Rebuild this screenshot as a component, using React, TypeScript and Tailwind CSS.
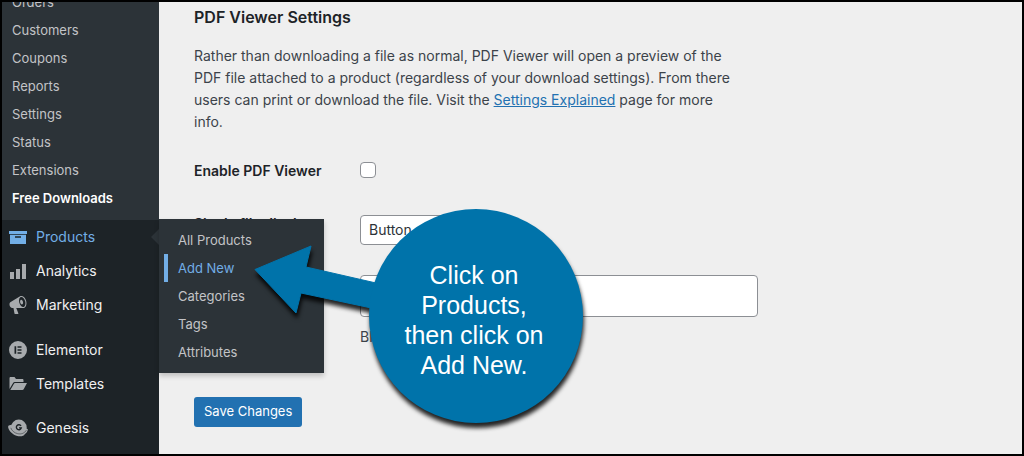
import type { ReactNode } from "react";

const wooItems = ["Orders", "Customers", "Coupons", "Reports", "Settings", "Status", "Extensions"];
const flyoutItems = ["All Products", "Add New", "Categories", "Tags", "Attributes"];

function Icon({ children }: { children: ReactNode }) {
  return (
    <svg viewBox="0 0 20 20" className="size-5 shrink-0 fill-current" aria-hidden="true">
      {children}
    </svg>
  );
}

const icons = {
  products: (
    <Icon>
      <path d="M1 4h18v3H1z" />
      <path fillRule="evenodd" d="M2 7.700h16v9.300H2zM7 9.300v1.500h6V9.300z" />
    </Icon>
  ),
  analytics: (
    <Icon>
      <path d="M2 11h4v7H2zM8 8h4v10H8zM14 3h4v15h-4z" />
    </Icon>
  ),
  marketing: (
    <Icon>
      <path
        fillRule="evenodd"
        d="M18.150 5.940c.46 1.620.38 3.220-.02 4.480-.42 1.280-1.260 2.180-2.300 2.480-.16.060-.26.060-.4.060-.06.020-.12.020-.18.020-.06.020-.14.020-.22.020h-6.800l2.220 5.500c.02.140-.06.260-.14.340-.08.100-.24.160-.34.160H6.950c-.1 0-.26-.06-.34-.16-.08-.08-.16-.2-.14-.34l-1-5.500H4.250l-.02-.02c-.5.060-1.080-.18-1.540-.62s-.88-1.080-1.060-1.880c-.24-.8-.2-1.560-.02-2.200.18-.62.580-1.080 1.060-1.300l.02-.02 9-5.400c.1-.06.180-.1.240-.16.060-.04.140-.08.240-.12.160-.08.280-.12.5-.18 1.040-.3 2.240.1 3.220.98s1.840 2.240 2.260 3.860zm-2.580 5.980h-.02c.4-.1.740-.34 1.040-.7.580-.7.860-1.760.860-3.040 0-.64-.1-1.300-.28-1.980-.34-1.360-1.020-2.500-1.780-3.240s-1.680-1.100-2.460-.88c-.82.220-1.400.96-1.700 2-.32 1.040-.28 2.360.06 3.720.38 1.360 1 2.500 1.800 3.240.78.740 1.620 1.100 2.480.88zm-2.540-7.080c.22-.04.42-.02.620.04.38.160.760.480 1.020 1s.42 1.200.42 1.780c0 .3-.04.560-.12.800-.18.480-.44.840-.86.940-.34.100-.8-.06-1.140-.4s-.64-.86-.78-1.500c-.18-.62-.12-1.240.02-1.720s.48-.84.820-.94z"
      />
    </Icon>
  ),
  elementor: (
    <Icon>
      <path fillRule="evenodd" d="M10 1a9 9 0 1 0 0 18a9 9 0 0 0 0-18zM6.500 6.200h1.700v7.600H6.500zM9.500 6.200h4v1.500h-4zM9.500 9.250h4v1.500h-4zM9.500 12.300h4v1.500h-4z" />
    </Icon>
  ),
  templates: (
    <Icon>
      <path d="M1.500 15V4.200c0-.7.500-1.200 1.200-1.200h3.800l1.500 2h6.300c.7 0 1.200.5 1.200 1.200V8H6.700c-.7 0-1.300.3-1.600 1z" />
      <path d="M2.300 16l3.500-6c.3-.6.700-.9 1.300-.9H19l-3.200 6c-.3.600-.8.900-1.400.9z" />
    </Icon>
  ),
  genesis: (
    <Icon>
      <circle cx="10.800" cy="9.500" r="7.900" />
      <path d="M3.500 7.200C1.200 6.800-.2 7.900.2 9.400c.9 3.800 4.400 7 8.300 8.300 3.500 1.200 7.200.7 8.200-1.400 1.700-1.200 3-3 3.200-5.100L17.500 10z" />
      <path fill="none" stroke="#1d2327" strokeWidth=".5" d="M2.800 9.800c.8 2.900 3.700 5.200 6.900 5.900 3.400.8 7-.5 8.700-3.600" />
      <path fill="none" stroke="#1d2327" strokeWidth="1.400" d="M13 7.900a2.500 2.500 0 1 0 .3 2h-2.300" />
    </Icon>
  ),
};

function MenuLink({ label, icon, active = false }: { label: string; icon: ReactNode; active?: boolean }) {
  return (
    <li>
      <a href="#" className={`flex h-[34px] items-center gap-2 pl-1.5 ${active ? "text-[#72aee6]" : "text-[#a7aaad]"}`}>
        {icon}
        <span className={active ? "" : "text-[#f0f0f1]"}>{label}</span>
      </a>
    </li>
  );
}

function Callout() {
  return (
    <div className="pointer-events-none absolute top-[198px] left-[248px] z-20 h-[235px] w-[345px]">
      <svg
        viewBox="250 200 345 235"
        className="absolute inset-0 size-full fill-[#0073aa] drop-shadow-[1px_5px_2px_rgba(0,0,0,0.85)]"
        aria-hidden="true"
      >
        <path d="M255 269.500L311 246l-5 21L376 283v26l-75-16-5 20z" stroke="#0073aa" strokeWidth="1" strokeLinejoin="round" />
        <ellipse cx="476" cy="316" rx="107" ry="107" />
      </svg>
      <p className="relative ml-[117px] w-[214px] pt-[60px] text-center font-['Liberation_Sans',Arial,sans-serif] text-[25px] leading-[30px] text-white">
        Click on
        <br />
        Products,
        <br />
        then click on
        <br />
        Add New.
      </p>
    </div>
  );
}

export default function App() {
  return (
    <div className="relative flex h-screen overflow-hidden border-2 border-black bg-[#efefef] font-[Inter,sans-serif] text-[13px] text-[#3c434a]">
      <nav aria-label="Admin menu" className="w-[157px] shrink-0 bg-[#1d2327]">
        <ul className="-mt-[14px] bg-[#2c3338] pb-2 text-[#c3c4c7]">
          {wooItems.map((item) => (
            <li key={item}>
              <a href="#" className="block pl-2.5 leading-7">{item}</a>
            </li>
          ))}
          <li>
            <a href="#" className="block pl-2.5 leading-7 font-semibold text-white">Free Downloads</a>
          </li>
        </ul>
        <div className="relative">
          <ul className="text-sm">
            <MenuLink label="Products" icon={icons.products} active />
            <MenuLink label="Analytics" icon={icons.analytics} />
            <MenuLink label="Marketing" icon={icons.marketing} />
          </ul>
          <span className="absolute top-[9px] right-0 border-y-8 border-r-8 border-y-transparent border-r-[#2c3338]" />
          <ul className="absolute -top-px left-full z-10 w-[165px] bg-[#2c3338] py-[7px] text-[#c3c4c7] shadow-[0_3px_5px_rgba(0,0,0,0.2)]">
            {flyoutItems.map((item) => (
              <li key={item}>
                <a
                  href="#"
                  className={
                    item === "Add New"
                      ? "ml-[5px] block border-l-4 border-[#72aee6] pl-2.5 leading-7 text-[#72aee6]"
                      : "block pl-[19px] leading-7"
                  }
                >
                  {item}
                </a>
              </li>
            ))}
          </ul>
        </div>
        <ul className="mt-[11px] text-sm">
          <MenuLink label="Elementor" icon={icons.elementor} />
          <MenuLink label="Templates" icon={icons.templates} />
        </ul>
        <ul className="mt-2.5 text-sm">
          <MenuLink label="Genesis" icon={icons.genesis} />
        </ul>
      </nav>

      <main className="min-w-0 flex-1 pt-[3px] pl-[35px]">
        <h2 className="text-base leading-6 font-semibold text-[#1d2327]">PDF Viewer Settings</h2>
        <p className="mt-4 max-w-[544px] text-sm leading-[22px]">
          Rather than downloading a file as normal, PDF Viewer will open a preview of the PDF file attached to a
          product (regardless of your download settings). From there users can print or download the file. Visit the{" "}
          <a href="#" className="text-[#2271b1] underline">Settings Explained</a> page for more info.
        </p>
        <form onSubmit={(e) => e.preventDefault()}>
          <div className="mt-[29px] grid grid-cols-[150px_1fr] gap-x-4 text-sm">
            <label htmlFor="enable" className="h-[53px] leading-[18px] font-semibold text-[#1d2327]">Enable PDF Viewer</label>
            <div>
              <input
                id="enable"
                type="checkbox"
                className="block size-4 appearance-none rounded border border-[#8c8f94] bg-white"
              />
            </div>
            <label htmlFor="display" className="h-[60px] leading-[18px] font-semibold text-[#1d2327]">Single file display</label>
            <div>
              <select
                id="display"
                className="block h-[30px] w-[120px] appearance-none rounded border border-[#8c8f94] bg-white px-2 text-[#2c3338]"
              >
                <option>Button</option>
              </select>
            </div>
            <label htmlFor="text" className="leading-[18px] font-semibold text-[#1d2327]">Button text</label>
            <div>
              <input
                id="text"
                type="text"
                className="block h-[42px] w-[398px] max-w-full rounded border border-[#8c8f94] bg-white px-2"
              />
              <p className="mt-2.5 leading-5">Blank</p>
            </div>
          </div>
          <button
            type="submit"
            className="mt-[50px] block h-[30px] rounded-[3px] bg-[#2271b1] px-2.5 text-[13px] text-white"
          >
            Save Changes
          </button>
        </form>
      </main>
      <Callout />
    </div>
  );
}
